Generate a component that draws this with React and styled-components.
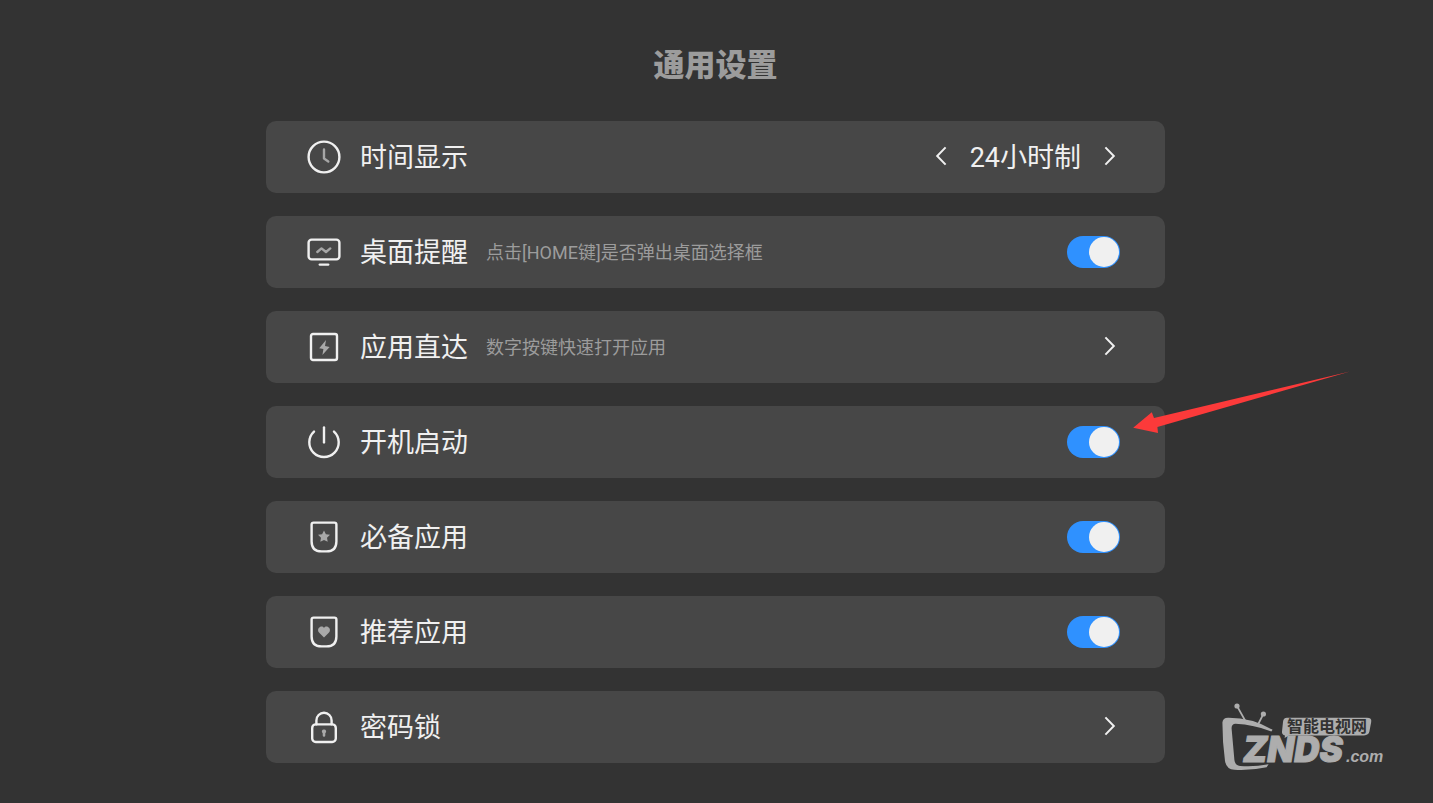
import React, { useState } from 'react';
import styled, { createGlobalStyle } from 'styled-components';

const GlobalStyle = createGlobalStyle`
  *, *::before, *::after { box-sizing: border-box; }
  body {
    margin: 0;
    background: #333333;
    color: #f0f0f0;
    font-family: Roboto, "Noto Sans CJK SC", sans-serif;
  }
`;

const Page = styled.main`
  position: relative;
  min-height: 100vh;
  display: flex;
  flex-direction: column;
  align-items: center;
  padding: 47px 18px 40px 16px;
`;

const Title = styled.h1`
  margin: 0 0 36px;
  font-size: 31px;
  line-height: 38px;
  font-weight: 900;
  color: #9c9c9c;
`;

const List = styled.ul`
  list-style: none;
  margin: 0;
  padding: 0;
  width: 100%;
  max-width: 899px;
  display: flex;
  flex-direction: column;
  gap: 23px;
`;

const Row = styled.li`
  position: relative;
  display: flex;
  align-items: center;
  min-height: 72px;
  padding: 0 45px 0 41px;
  border-radius: 10px;
  background: #474747;
`;

const RowIcon = styled.svg`
  flex: none;
  width: 34px;
  height: 34px;
  margin-right: 19px;
  fill: none;
  stroke: #f0f0f0;
  stroke-width: 2.4;
  stroke-linecap: round;
  stroke-linejoin: round;

  .soft { stroke: #a6a6a6; }
  .solid { stroke: none; fill: #a9a9a9; }
`;

const Label = styled.label`
  padding-top: 2px;
  font-size: 27px;
  line-height: 40px;
`;

const Hint = styled.span`
  margin-left: 18px;
  padding-top: 2px;
  font-size: 18px;
  line-height: 26px;
  color: #9c9c9c;
`;

const Control = styled.div`
  display: flex;
  align-items: center;
  gap: 23px;
  margin-left: auto;
  padding-right: ${(p) => (p.$inset ? '4px' : '0')};
`;

const Value = styled.output`
  padding-top: 2px;
  font-size: 27px;
  line-height: 40px;
`;

const ArrowButton = styled.button`
  display: flex;
  padding: 0 0 2px;
  border: 0;
  background: none;
  color: #f0f0f0;
  cursor: pointer;

  svg {
    width: 12px;
    height: 20px;
    fill: none;
    stroke: currentColor;
    stroke-width: 2;
  }
`;

const Switch = styled.input`
  appearance: none;
  width: 53px;
  height: 32px;
  margin: 0;
  padding: 1px;
  border-radius: 16px;
  background: #777777;
  cursor: pointer;

  &::before {
    content: "";
    display: block;
    width: 30px;
    height: 30px;
    border-radius: 50%;
    background: #f0f0f0;
  }
  &:checked { background: #2f91ff; }
  &:checked::before { margin-left: 21px; }
`;

const Pointer = styled.svg`
  position: absolute;
  z-index: 1;
  left: calc(100% - 35px);
  top: -36px;
  width: 220px;
  height: 66px;
  fill: #fc3a3a;
  pointer-events: none;
`;

const Watermark = styled.svg`
  position: absolute;
  right: 43px;
  bottom: 28px;
  width: 170px;
  height: 75px;
`;

const STAR = 'M17 10.4 L18.9 14.2 L23 14.8 L20 17.7 L20.7 21.8 L17 19.9 L13.3 21.8 L14 17.7 L11 14.8 L15.1 14.2 Z';
const BADGE = 'M6.6 2.6 H27.4 Q29.4 2.6 29.4 4.6 V21.4 Q29.4 31.4 19.4 31.4 H14.6 Q4.6 31.4 4.6 21.4 V4.6 Q4.6 2.6 6.6 2.6 Z';

const icons = {
  clock: (
    <>
      <circle cx="17" cy="17" r="15.4" />
      <path className="soft" d="M17 9.5 V18.6 L21.3 21.5" />
    </>
  ),
  monitor: (
    <>
      <rect x="1.6" y="4.6" width="30.8" height="19.8" rx="3" />
      <path d="M12.8 29.6 H21.2" />
      <path className="soft" d="M10.3 17 L14.5 13.4 L19 17 L23.3 13.4" />
    </>
  ),
  bolt: (
    <>
      <rect x="4" y="4" width="26" height="26" rx="2" />
      <path className="solid" d="M19 10 L12.2 18.2 L16.4 19 L15.4 25 L22.6 16.9 L18 15.9 Z" />
    </>
  ),
  power: (
    <>
      <path d="M7 6.6 A14.7 14.7 0 1 0 27 6.6" />
      <path d="M17 2.4 V17.4" />
    </>
  ),
  star: (
    <>
      <path d={BADGE} />
      <path className="solid" d={STAR} />
    </>
  ),
  heart: (
    <>
      <path d={BADGE} />
      <path className="solid" d="M17 22.4 L12 17.6 C10.4 15.8 10.8 12.9 13 11.9 C14.6 11.2 16.2 11.7 17 13 C17.8 11.7 19.4 11.2 21 11.9 C23.2 12.9 23.6 15.8 22 17.6 Z" />
    </>
  ),
  lock: (
    <>
      <rect x="5.2" y="14.4" width="23.6" height="17.6" rx="3.6" />
      <path d="M9.4 14.2 V10.4 A7.6 7.6 0 0 1 24.6 10.4 V14.2" />
      <path className="solid" d="M17 19.4 A2.1 2.1 0 0 1 18.3 23.2 V25.4 A1.3 1.3 0 0 1 15.7 25.4 V23.2 A2.1 2.1 0 0 1 17 19.4 Z" />
    </>
  ),
};

const settings = [
  { id: 'time', icon: 'clock', label: '时间显示', kind: 'choice' },
  { id: 'desktop', icon: 'monitor', label: '桌面提醒', hint: '点击[HOME键]是否弹出桌面选择框', kind: 'switch' },
  { id: 'direct', icon: 'bolt', label: '应用直达', hint: '数字按键快速打开应用', kind: 'link' },
  { id: 'boot', icon: 'power', label: '开机启动', kind: 'switch', pointed: true },
  { id: 'essential', icon: 'star', label: '必备应用', kind: 'switch' },
  { id: 'recommend', icon: 'heart', label: '推荐应用', kind: 'switch' },
  { id: 'lock', icon: 'lock', label: '密码锁', kind: 'link' },
];

const formats = ['24小时制', '12小时制'];

function Chevron({ back, ...rest }) {
  return (
    <ArrowButton type="button" {...rest}>
      <svg viewBox="0 0 12 20" aria-hidden="true">
        <path d={back ? 'M10.6 1.4 L2.2 10 L10.6 18.6' : 'M1.4 1.4 L9.8 10 L1.4 18.6'} />
      </svg>
    </ArrowButton>
  );
}

function TimeChoice({ id }) {
  const [index, setIndex] = useState(0);
  const next = () => setIndex((index + 1) % formats.length);
  return (
    <Control $inset>
      <Chevron back aria-label="上一个" onClick={next} />
      <Value id={id}>{formats[index]}</Value>
      <Chevron aria-label="下一个" onClick={next} />
    </Control>
  );
}

function Setting({ id, icon, label, hint, kind, pointed }) {
  return (
    <Row>
      <RowIcon viewBox="0 0 34 34" aria-hidden="true">{icons[icon]}</RowIcon>
      <Label htmlFor={id}>{label}</Label>
      {hint && <Hint>{hint}</Hint>}
      {kind === 'choice' && <TimeChoice id={id} />}
      {kind === 'switch' && (
        <Control>
          <Switch type="checkbox" role="switch" id={id} defaultChecked />
        </Control>
      )}
      {kind === 'link' && (
        <Control $inset>
          <Chevron id={id} />
        </Control>
      )}
      {pointed && (
        <Pointer viewBox="0 0 220 66" aria-hidden="true">
          <path d="M3.2 57.8 L21.8 42.2 L24 48 L220 1.4 L27.4 57 L28 63 Z" />
        </Pointer>
      )}
    </Row>
  );
}

function Logo() {
  return (
    <Watermark viewBox="0 0 170 75" role="img" aria-label="智能电视网 ZNDS.com">
      <g fill="#adadad">
        <circle cx="17" cy="6" r="2.6" />
        <circle cx="43.4" cy="14" r="2.6" />
        <path d="M17 6 L25.4 21 M43.4 14 L38 24.5" stroke="#adadad" strokeWidth="1.7" fill="none" />
        <path d="M2.4 22.4 Q2.8 18 8 17.8 Q32 17.6 52.6 29.8 L51.4 31.4 Q34 24.8 15.6 23.8 Q11.4 24 11.6 28.5 L14.4 60 Q15 65.4 20 66 Q34 67.2 48.6 64.2 L46.6 67.2 Q30 70.8 14.4 69.8 Q6.4 69.4 5 61 Q2.4 42 2.4 22.4 Z" />
        <path d="M67 17.8 H147 Q152 17.8 151.2 22 L149.4 31.6 Q148.6 35.4 144 35.4 H69 L64.6 38 L65 35.4 Q61.6 34.6 62 31.4 L63 22 Q63.4 17.8 67 17.8 Z" />
      </g>
      <text x="67" y="32" fontFamily="'Noto Sans CJK SC', sans-serif" fontSize="16" fontWeight="700" fill="#333333">智能电视网</text>
      <text x="23" y="62" fontFamily="Inter, sans-serif" fontSize="35" fontWeight="900" fontStyle="italic" fill="#adadad" stroke="#adadad" strokeWidth="1">ZNDS</text>
      <text x="126" y="62" fontFamily="'Liberation Sans', sans-serif" fontSize="16" fontWeight="700" fontStyle="italic" fill="#adadad">.com</text>
    </Watermark>
  );
}

export default function App() {
  return (
    <>
      <GlobalStyle />
      <Page>
        <Title>通用设置</Title>
        <List>
          {settings.map((item) => (
            <Setting key={item.id} {...item} />
          ))}
        </List>
        <Logo />
      </Page>
    </>
  );
}
